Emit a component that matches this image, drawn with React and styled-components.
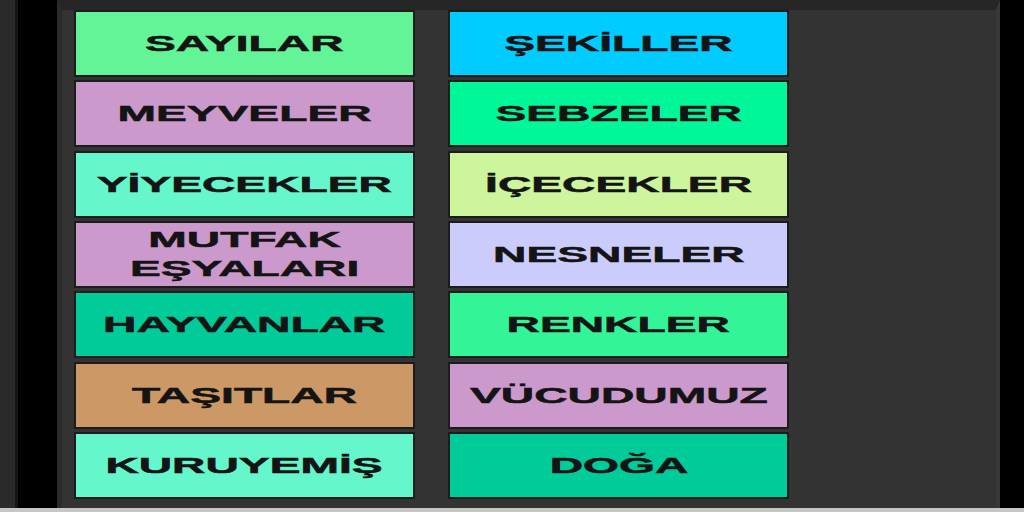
import React from "react";
import styled, { createGlobalStyle } from "styled-components";

const GlobalStyle = createGlobalStyle`
  html, body {
    margin: 0;
    padding: 0;
    width: 1024px;
    height: 512px;
    overflow: hidden;
    background: #000;
  }
  #root {
    width: 1024px;
    height: 512px;
  }
`;

const Frame = styled.div`
  width: 1024px;
  height: 512px;
  display: flex;
  flex-direction: column;
  background: #000;
`;

const MainRow = styled.div`
  flex: 1;
  display: flex;
  min-height: 0;
`;

const LeftEdge = styled.div`
  width: 15px;
  background: #2a2a2a;
  border-right: 3px solid #151515;
`;

const Gutter = styled.div`
  width: ${(p) => p.$w}px;
  background: #000;
`;

const Panel = styled.div`
  width: 943px;
  background: #333333;
  border-left: 5px solid #2b2b2b;
  border-top: 10px solid #262626;
  border-right: 4px solid #383838;
  box-sizing: border-box;
  padding: 2px 0 0 14px;
`;

const Grid = styled.div`
  display: grid;
  grid-template-columns: 337px 337px;
  grid-auto-rows: 63px;
  column-gap: 37px;
  row-gap: 7.33px;
`;

const Tile = styled.div`
  background: ${(p) => p.$bg};
  box-shadow: 0 0 0 2px #1c1c1c;
  display: flex;
  align-items: center;
  justify-content: center;
  overflow: hidden;
`;

const Label = styled.span`
  display: inline-block;
  font-family: "Liberation Sans", Arial, sans-serif;
  font-weight: 700;
  font-size: 22px;
  line-height: 29px;
  color: #141414;
  -webkit-text-stroke: 0.5px #141414;
  text-align: center;
  white-space: pre-line;
  transform: scaleX(2.1);
  transform-origin: center;
`;

const BottomLine = styled.div`
  height: 4px;
  background: #c6c6c6;
`;

const items = [
  { label: "SAYILAR", bg: "#62f497" },
  { label: "ŞEKİLLER", bg: "#00ccff" },
  { label: "MEYVELER", bg: "#cc99cc" },
  { label: "SEBZELER", bg: "#00f799" },
  { label: "YİYECEKLER", bg: "#66f6cb" },
  { label: "İÇECEKLER", bg: "#cdf69c" },
  { label: "MUTFAK\nEŞYALARI", bg: "#cc99cc" },
  { label: "NESNELER", bg: "#ccccfc" },
  { label: "HAYVANLAR", bg: "#00cb99" },
  { label: "RENKLER", bg: "#33f598" },
  { label: "TAŞITLAR", bg: "#cc9966" },
  { label: "VÜCUDUMUZ", bg: "#cc99cc" },
  { label: "KURUYEMİŞ", bg: "#66f6cb" },
  { label: "DOĞA", bg: "#00cb99" },
];

export default function App() {
  return (
    <>
      <GlobalStyle />
      <Frame>
        <MainRow>
          <LeftEdge />
          <Gutter $w={39} />
          <Panel>
            <Grid>
              {items.map((it) => (
                <Tile key={it.label} $bg={it.bg}>
                  <Label>{it.label}</Label>
                </Tile>
              ))}
            </Grid>
          </Panel>
          <Gutter $w={24} />
        </MainRow>
        <BottomLine />
      </Frame>
    </>
  );
}
